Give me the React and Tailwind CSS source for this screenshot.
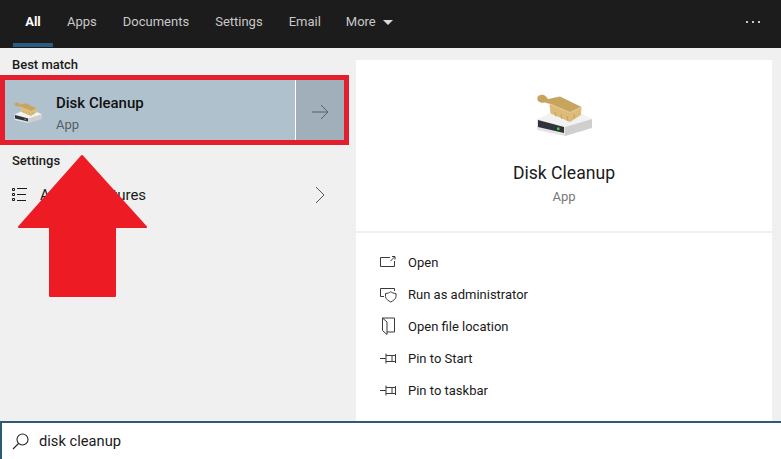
const font = { fontFamily: 'Roboto, "Noto Sans", sans-serif' };

function DiskIcon({ className }) {
  return (
    <svg viewBox="0 0 56 44" className={className}>
      <path d="M1 27 L14 21 L44 21 L56 27 L29 35 Z" fill="#f2f2f2" />
      <path d="M1 27 L29 35 L29 44 L1 38 Z" fill="#e4e4e4" />
      <path d="M2 28 L28 35 L28 41 L2 35 Z" fill="#30343a" />
      <path d="M29 35 L56 27 L56 36 L29 44 Z" fill="#cfcfcf" />
      <rect x="21" y="35.5" width="2.5" height="2.5" fill="#3fc95a" />
      <path d="M13.5 12 L14.5 21.5 L34 30 L45 23 L45.5 15 L34 20 Z" fill="#dcbc78" />
      <path d="M19 20 L20 24.5M25 22 L26 27M31 24 L32 29M38 22 L38.5 26.5" stroke="#bf9a52" strokeWidth="0.8" />
      <path d="M1.3 6 C2 2 8 2 10 4.5 L12 7 L24 4.5 L45.5 15 L34 20.5 L14 12 L9 10.5 C5 11.5 1 10 1.3 6 Z" fill="#c8a55e" />
      <path d="M14 12 L34 20.5 L45.5 15" fill="none" stroke="#e8cf94" strokeWidth="0.8" />
    </svg>
  );
}

function Act({ icon, label }) {
  return (
    <div className="flex items-center h-8">
      <span className="w-[18px] h-[18px] mr-[11px] flex items-center justify-center">{icon}</span>
      <span className="text-[13px] leading-none text-[#1a1a1a]">{label}</span>
    </div>
  );
}

const stroke = { fill: "none", stroke: "#3a3a3a", strokeWidth: 1 };

const PinIcon = () => (
  <svg width="18" height="18" viewBox="0 0 18 18" {...stroke}>
    <path d="M1 9.5H7M7 4.5V14.5M7 6.5H17M7 12.5H17M16.5 5V14M13 6.5V12.5" />
  </svg>
);

export default function App() {
  return (
    <div className="relative w-[781px] h-[459px] overflow-hidden flex flex-col bg-[#f0f0f0]" style={font}>
      <div className="h-12 bg-[#1c1c1c] flex items-center pb-1 text-[13px] text-[#c8c8c8] relative">
        <div className="relative h-11 flex items-center w-[40px] ml-[13px] justify-center font-bold text-white">
          All
          <div className="absolute bottom-[-3px] left-0 right-0 h-[4px] bg-[#2b5b80]" />
        </div>
        <span className="ml-[14px]">Apps</span>
        <span className="ml-[26px]">Documents</span>
        <span className="ml-[26px]">Settings</span>
        <span className="ml-[26px]">Email</span>
        <span className="ml-[25px]">More</span>
        <span className="ml-[7px] w-0 h-0 border-x-[5px] border-x-transparent border-t-[5px] border-t-[#d8d8d8]" />
        <div className="ml-auto mr-[21px] flex gap-1">
          <i className="w-[2px] h-[2px] bg-[#c8c8c8]" />
          <i className="w-[2px] h-[2px] bg-[#c8c8c8]" />
          <i className="w-[2px] h-[2px] bg-[#c8c8c8]" />
        </div>
      </div>

      <div className="flex-1 flex min-h-0">
        <div className="w-[344px] shrink-0 flex flex-col">
          <div className="h-[27px] flex items-center pl-3 pt-[7px] text-[13px] font-medium text-[#1a1a1a]">Best match</div>
          <div className="w-[349px] h-[70px] relative border-[5px] border-[#e31e2d] bg-[#b0c1ce] flex">
            <div className="flex-1 flex items-center">
              <DiskIcon className="w-[28px] h-[22px] ml-[9px] mt-[4px]" />
              <div className="ml-[14px] flex flex-col pt-[8px]">
                <span className="text-[15px] leading-5 font-medium text-[#111]">Disk Cleanup</span>
                <span className="text-[13px] leading-5 mt-[2px] text-[#555f66]">App</span>
              </div>
            </div>
            <div className="w-[49px] border-l border-white bg-[#a0afba] flex items-center justify-center pt-1">
              <svg width="18" height="18" viewBox="0 0 18 18" fill="none" stroke="#55606a" strokeWidth="1"><path d="M1 9H17M10 2L17 9L10 16" /></svg>
            </div>
          </div>
          <div className="h-[28px] flex items-center pl-3 pt-[4px] text-[13px] font-medium text-[#1a1a1a]">Settings</div>
          <div className="h-[36px] flex items-center pl-3 pr-[19px] mt-[4px]">
            <svg width="16" height="16" viewBox="0 0 16 16" fill="none" stroke="#1a1a1a" strokeWidth="1">
              <path d="M.5 1.5H2.5V3.5H.5ZM.5 6.5H2.5V8.5H.5ZM.5 11.5H2.5V13.5H.5ZM5 1.5H15M5 7.5H14M5 13.5H14" />
            </svg>
            <span className="ml-3 text-[15px] text-[#1a1a1a]">Apps &amp; features</span>
            <svg className="ml-auto" width="10" height="18" viewBox="0 0 10 18" fill="none" stroke="#555" strokeWidth="1"><path d="M1 1L9 9L1 17" /></svg>
          </div>
        </div>

        <div className="flex-1 pl-3 pr-[9px] pt-3 flex min-w-0">
          <div className="flex-1 bg-white flex flex-col">
            <div className="h-[173px] border-b-2 border-[#f0f0f0] flex flex-col items-center pt-[32px]">
              <DiskIcon className="w-[56px] h-[44px]" />
              <div className="mt-[25px] text-[17.6px] leading-6 text-[#1a1a1a]">Disk Cleanup</div>
              <div className="mt-[2px] text-[13px] leading-5 text-[#777]">App</div>
            </div>
            <div className="pt-[13px] pl-[23px] flex flex-col">
              <Act label="Open" icon={
                <svg width="18" height="18" viewBox="0 0 18 18" {...stroke}><path d="M11 4.5H1.5V13.5H15.5V8M11.5 8L15.5 4M13 3.5H16V6.5" /></svg>
              } />
              <Act label="Run as administrator" icon={
                <svg width="18" height="18" viewBox="0 0 18 18" {...stroke}><path d="M5 11.5H1.5V3.5H15.5V6M6.5 8.5C9 8.5 10.5 7.5 11.7 6.8C13 7.5 14.5 8.5 17 8.5V11.5C17 14 14 15.8 11.7 17C9.5 15.8 6.5 14 6.5 11.5Z" /></svg>
              } />
              <Act label="Open file location" icon={
                <svg width="18" height="18" viewBox="0 0 18 18" {...stroke}><path d="M3.5 1H15.5V15H8M3.5 1V13.5L8 17.5V5L3.5 1Z" /></svg>
              } />
              <Act label="Pin to Start" icon={<PinIcon />} />
              <Act label="Pin to taskbar" icon={<PinIcon />} />
            </div>
          </div>
        </div>
      </div>

      <div className="h-[38px] bg-white border-t-2 border-l-2 border-[#2b5b76] flex items-center">
        <svg className="ml-[10px]" width="17" height="17" viewBox="0 0 17 17" fill="none" stroke="#222" strokeWidth="1.1"><circle cx="10.5" cy="6.5" r="5.5" /><path d="M6.5 10.5L1 16" /></svg>
        <span className="ml-[10px] text-[14.7px] text-[#1a1a1a]">disk cleanup</span>
      </div>

      <svg className="absolute left-[17px] top-[155px]" width="131" height="143" viewBox="0 0 131 143">
        <path d="M65 1L129 72H98V141H33V72H2Z" fill="#ed1c24" stroke="#ed1c24" strokeWidth="2" strokeLinejoin="round" />
      </svg>
    </div>
  );
}
